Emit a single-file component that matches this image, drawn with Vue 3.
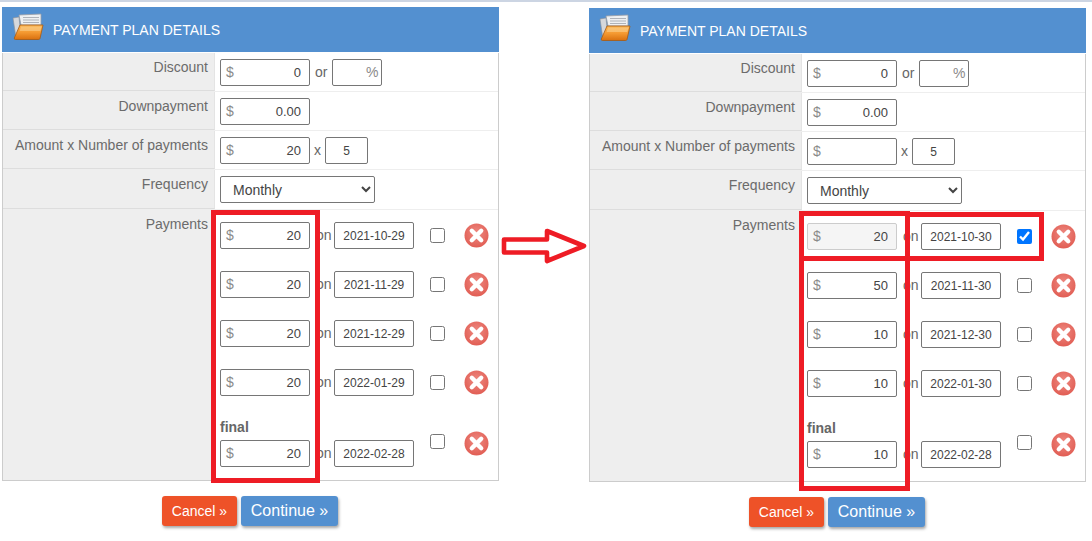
<script setup>
const panels = [
  {
    cls: 'left',
    amount: '20',
    date: ['2021-10-29', '2021-11-29', '2021-12-29', '2022-01-29', '2022-02-28'],
    vals: ['20', '20', '20', '20', '20'],
    checked: -1,
    boxes: ['l1']
  },
  {
    cls: 'right',
    amount: '',
    date: ['2021-10-30', '2021-11-30', '2021-12-30', '2022-01-30', '2022-02-28'],
    vals: ['20', '50', '10', '10', '10'],
    checked: 0,
    boxes: ['r1', 'r2', 'r3']
  }
]
</script>

<template>
  <div class="page">
    <div class="topline"></div>
    <div class="columns">
      <div v-for="p in panels" :key="p.cls" class="col" :class="p.cls">
        <section class="panel">
          <header class="head">
            <svg class="folder" width="32" height="28" viewBox="0 0 32 28">
              <defs>
                <linearGradient :id="`fold${p.cls}`" x1="0" y1="0" x2="0" y2="1">
                  <stop offset="0" stop-color="#f9b554" />
                  <stop offset="0.5" stop-color="#f59a32" />
                  <stop offset="1" stop-color="#d9700f" />
                </linearGradient>
              </defs>
              <path d="M1 5 L7 4 L9 24 L4 25 Z" fill="#d6d8dc" stroke="#8b8f96" stroke-width="0.6" />
              <path d="M7 2 L29 1 V12 H9 Z" fill="#eef0f2" stroke="#9a9ea6" stroke-width="0.8" />
              <path d="M11 4.5 H27 M11 7 H27 M11 9.5 H27" stroke="#9ea3ab" stroke-width="0.8" />
              <path d="M8 12 H31 L28 25.5 Q27.7 26.5 26.5 26.5 H3.5 Q2 26.5 2.3 25 Z" :fill="`url(#fold${p.cls})`" stroke="#a85a10" stroke-width="0.8" />
              <path d="M9 13.5 H29.5 L28.4 18 H7.6 Z" fill="#fbd18e" opacity="0.6" />
            </svg>
            <h2 class="title">PAYMENT PLAN DETAILS</h2>
          </header>

          <div class="row">
            <div class="lab">Discount</div>
            <div class="val">
              <label class="money"><span class="cur">$</span><input class="num" value="0" /></label>
              <span class="word">or</span>
              <label class="pct"><input class="num" value="" /><span class="cur">%</span></label>
            </div>
          </div>
          <div class="row">
            <div class="lab">Downpayment</div>
            <div class="val">
              <label class="money"><span class="cur">$</span><input class="num" value="0.00" /></label>
            </div>
          </div>
          <div class="row">
            <div class="lab">Amount x Number of payments</div>
            <div class="val">
              <label class="money"><span class="cur">$</span><input class="num" :value="p.amount" /></label>
              <span class="word x">x</span>
              <input class="count" value="5" />
            </div>
          </div>
          <div class="row tall">
            <div class="lab">Frequency</div>
            <div class="val">
              <select class="freq"><option>Monthly</option></select>
            </div>
          </div>
          <div class="row pay">
            <div class="lab">Payments</div>
            <div class="list">
              <div v-for="(v, i) in p.vals" :key="i" class="line" :class="{ last: i === 4 }">
                <div class="amt">
                  <strong v-if="i === 4" class="final">final</strong>
                  <label class="money" :class="{ off: i === p.checked }">
                    <span class="cur">$</span>
                    <input class="num" :value="v" :disabled="i === p.checked" />
                  </label>
                </div>
                <span class="on">on</span>
                <input class="date" :value="p.date[i]" />
                <input class="check" type="checkbox" :checked="i === p.checked" />
                <svg class="del" width="25" height="25" viewBox="0 0 25 25">
                  <defs>
                    <radialGradient :id="`rd${p.cls}${i}`" cx="0.5" cy="0.4" r="0.65">
                      <stop offset="0" stop-color="#ee8a82" />
                      <stop offset="1" stop-color="#e05a50" />
                    </radialGradient>
                  </defs>
                  <circle cx="12.5" cy="12.5" r="12" :fill="`url(#rd${p.cls}${i})`" />
                  <path d="M7.8 7.8 L17.2 17.2 M17.2 7.8 L7.8 17.2" stroke="#fff" stroke-width="4.4" stroke-linecap="round" />
                </svg>
              </div>
            </div>
          </div>

          <div v-for="b in p.boxes" :key="b" class="mark" :class="b"></div>
        </section>

        <div class="actions">
          <button class="btn cancel">Cancel »</button>
          <button class="btn go">Continue »</button>
        </div>
      </div>

      <svg class="arrow" width="90" height="40" viewBox="0 0 90 40">
        <path d="M3 11.5 H46 V3 L83 18 L46 33 V24.5 H3 Z" fill="#fff" stroke="#ee1c25" stroke-width="4.6" stroke-linejoin="round" />
      </svg>
    </div>
  </div>
</template>

<style>
html, body { margin: 0; background: #fff; }
</style>

<style scoped>
.page { width: 1092px; height: 541px; overflow: hidden; font-family: "Liberation Sans", Arial, sans-serif; color: #666; }
.topline { height: 2px; background: #ccd5e3; }
.columns { position: relative; display: flex; gap: 90px; padding: 5px 0 0 2px; }
.col { width: 497px; }
.col.right { margin-top: 1px; }
.panel { position: relative; border: 1px solid #ccc; border-top: 0; background: #fff; }
.head { display: flex; align-items: center; height: 46px; margin: 0 -1px 0 -1px; background: #5390d0; padding-left: 10px; box-sizing: border-box; border-bottom: 1px solid #fff; }
.folder { margin-right: 9px; margin-top: -5px; }
.title { margin: 0; font-size: 14px; font-weight: 400; color: #fff; padding-top: 1px; }
.row { display: grid; grid-template-columns: 212px 1fr; height: 39px; border-bottom: 1px solid #eee; box-sizing: border-box; }
.row.tall { height: 40px; }
.row.pay { height: 270px; border-bottom: 0; }
.lab { background: #eee; border-bottom: 1px solid #ddd; border-right: 1px solid #e4e4e4; text-align: right; font-size: 14px; line-height: 16px; padding: 6px 6px 0 0; box-sizing: border-box; color: #6b6b6b; }
.pay .lab { border-bottom: 0; }
.val { display: flex; align-items: flex-start; padding: 6px 0 0 5px; }
.money, .pct { display: flex; align-items: center; height: 27px; box-sizing: border-box; border: 1px solid #767676; border-radius: 2px; background: #fff; }
.money { width: 90px; padding: 0 8px 0 5px; }
.pct { width: 50px; padding: 0 3px 0 0; }
.cur { font-size: 14px; color: #8a8a8a; margin-top: -1px; }
.num { flex: 1; width: 0; min-width: 0; border: 0; padding: 0; outline: 0; background: transparent; text-align: right; font: 13px "Liberation Sans", Arial, sans-serif; color: #444; }
.word { font-size: 14px; line-height: 27px; margin: 0 5px; color: #666; }
.word.x { margin: 0 4px; }
.count { width: 43px; height: 27px; box-sizing: border-box; border: 1px solid #767676; border-radius: 2px; text-align: center; font: 12px "Liberation Sans", Arial, sans-serif; color: #444; padding: 0; outline: 0; }
.freq { width: 155px; height: 27px; box-sizing: border-box; border: 1px solid #767676; border-radius: 2px; background: #fff; font: 14px "Liberation Sans", Arial, sans-serif; color: #444; padding-left: 8px; }
.list { padding: 12px 0 0 5px; }
.line { display: flex; align-items: center; height: 27px; margin-bottom: 22px; }
.line.last { margin-top: 44px; margin-bottom: 0; align-items: flex-end; }
.amt { position: relative; width: 90px; }
.final { position: absolute; left: 0; bottom: 32px; font-size: 14px; line-height: 16px; color: #666; }
.off { border-color: #ccc; background: #f5f5f5; }
.on { width: 24px; padding-left: 6px; box-sizing: border-box; font-size: 14px; color: #666; line-height: 27px; }
.date { width: 80px; height: 27px; box-sizing: border-box; border: 1px solid #767676; border-radius: 2px; padding: 0; text-align: center; font: 12px "Liberation Sans", Arial, sans-serif; color: #444; outline: 0; }
.check { width: 15px; height: 15px; margin: 0 0 0 16px; flex: none; }
.del { margin-left: 19px; flex: none; }
.last .check { align-self: flex-start; margin-top: -6px; }
.last .del { align-self: flex-start; margin-top: -9px; }
.mark { position: absolute; box-sizing: border-box; border: 5px solid #ee1c25; pointer-events: none; }
.l1 { left: 208px; top: 203px; width: 109px; height: 273px; }
.r1 { left: 209px; top: 203px; width: 111px; height: 280px; }
.r2 { left: 209px; top: 203px; width: 111px; height: 50px; }
.r3 { left: 315px; top: 204px; width: 139px; height: 49px; }
.actions { display: flex; justify-content: center; gap: 4px; margin: 15px 0 0 -1px; }
.btn { height: 30px; border: 0; border-radius: 3px; color: #fff; font-family: "Liberation Sans", Arial, sans-serif; box-shadow: 1px 2px 3px rgba(0,0,0,.35); padding: 0; }
.cancel { width: 75px; background: #ee5228; font-size: 14px; }
.go { width: 97px; background: #5390d0; font-size: 16px; }
.arrow { position: absolute; left: 501px; top: 226px; }
</style>
